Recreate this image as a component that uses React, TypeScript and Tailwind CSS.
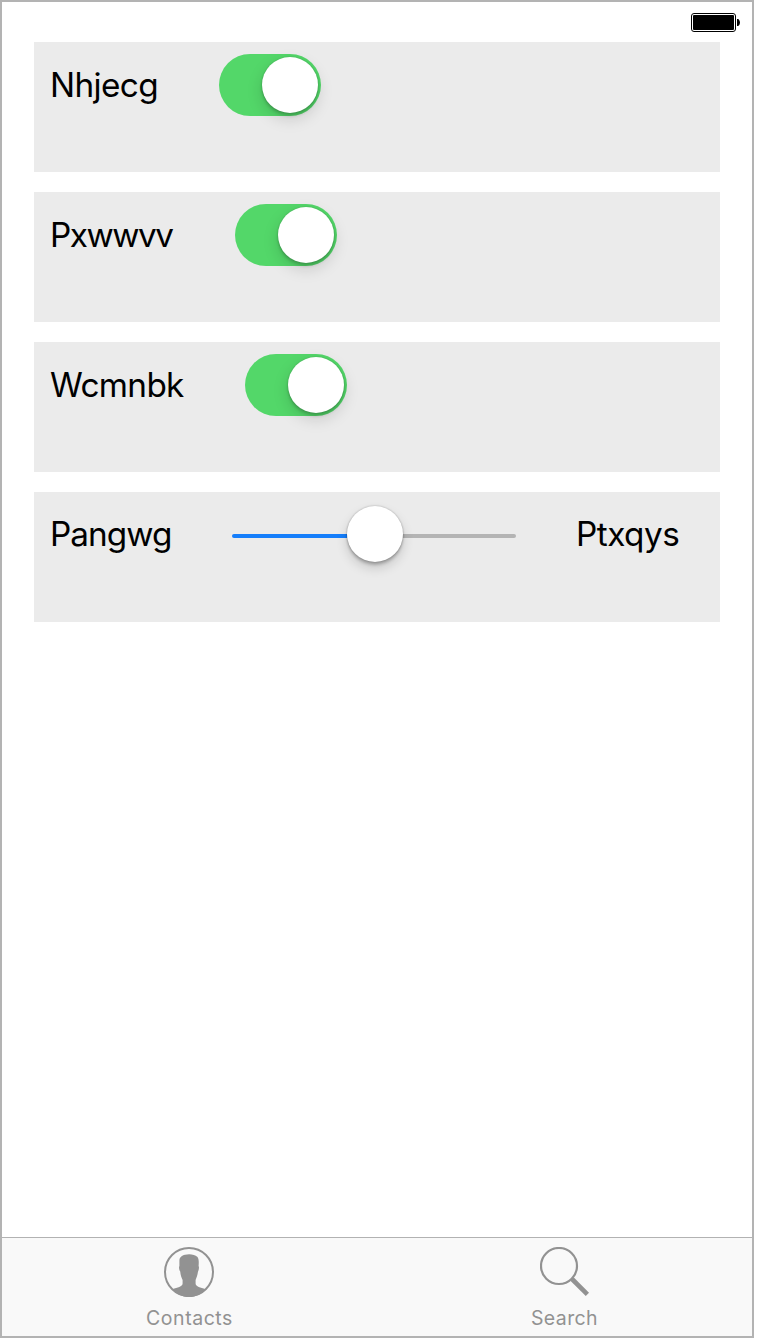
import React from "react";

const labelBase =
  "block h-[42px] whitespace-nowrap text-[33.3px] leading-[42px] text-black";

function Toggle() {
  return (
    <div
      role="switch"
      aria-checked="true"
      className="flex h-[62px] w-[102px] shrink-0 items-center justify-end rounded-full bg-[#53d769] pr-[3px]"
    >
      <div className="size-14 rounded-full bg-white shadow-[0_6px_16px_rgba(0,0,0,0.15),0_3px_3px_rgba(0,0,0,0.15),0_0_2px_rgba(0,0,0,0.2)]" />
    </div>
  );
}

function ToggleRow({ label, width, spacing }: { label: string; width: string; spacing: string }) {
  return (
    <div className="flex h-[130px] items-start bg-[#ebebeb] pt-3 pl-4">
      <div className={`shrink-0 pt-[10px] ${width}`}>
        <span className={`${labelBase} ${spacing}`}>{label}</span>
      </div>
      <Toggle />
    </div>
  );
}

function SliderRow() {
  return (
    <div className="flex h-[130px] items-start bg-[#ebebeb] pt-[14px] pl-4">
      <div className="w-[182px] shrink-0 pt-[7px]">
        <span className={`${labelBase} tracking-[-0.95px]`}>Pangwg</span>
      </div>
      <div className="flex h-14 w-[284px] shrink-0 items-center">
        <div className="mt-1 h-1 w-[115px] rounded-l-full bg-[#157efb]" />
        <div className="z-10 size-14 shrink-0 rounded-full bg-white shadow-[0_6px_12px_rgba(0,0,0,0.16),0_3px_3px_rgba(0,0,0,0.2),0_0_2px_rgba(0,0,0,0.3)]" />
        <div className="mt-1 h-1 flex-1 rounded-r-full bg-[#b4b4b4]" />
      </div>
      <div className="ml-[60px] pt-[7px]">
        <span className={`${labelBase} tracking-[-0.5px]`}>Ptxqys</span>
      </div>
    </div>
  );
}

function ContactsIcon() {
  return (
    <svg className="mr-[2px]" width="50" height="50" viewBox="0 0 50 50" fill="#929292">
      <circle cx="25" cy="25" r="24" fill="none" stroke="#929292" strokeWidth="2" />
      <path d="M15.4 19V13.5C15.4 10.2 18 8.4 21 7.7C25 6.5 31 7.2 33.2 9.8C35.2 11.8 34.8 16 34.6 19C35.4 20 34.8 23.2 34 24.6C33.5 28.4 32.4 31 31.6 33V36.5C31.8 40 36.5 40.4 41.5 42.2C38 47 31.5 50 25 50S12 47 8.5 42.2C13.5 40.4 18.4 40 18.6 36.5V33C17.6 31 16.6 28.4 16.2 24.6C15.2 23.2 14.6 20 15.4 19Z" />
    </svg>
  );
}

function SearchIcon() {
  return (
    <svg width="50" height="50" viewBox="0 0 50 50" fill="none" stroke="#929292">
      <circle cx="19" cy="19" r="18" strokeWidth="2.2" />
      <path d="M32 32L47.4 47.4" strokeWidth="4.6" />
    </svg>
  );
}

function Tab({ icon, label, spacing }: { icon: React.ReactNode; label: string; spacing: string }) {
  return (
    <div className="flex flex-1 flex-col items-center pt-[9px]">
      {icon}
      <span className={`mt-[9px] text-[19.5px] leading-6 whitespace-nowrap text-[#929292] ${spacing}`}>
        {label}
      </span>
    </div>
  );
}

export default function App() {
  return (
    <div className="h-[1340px] w-[760px] bg-white font-['Inter',sans-serif]">
      <div className="flex h-[1338px] w-[754px] flex-col border-2 border-[#b3b3b3] bg-white">
        <div className="flex h-10 shrink-0 items-start justify-end pt-[11px] pr-3">
          <svg width="49" height="19" viewBox="0 0 49 19">
            <rect x="0.5" y="0.5" width="44" height="18" rx="2.5" fill="white" stroke="black" />
            <rect x="2" y="2" width="41" height="15" rx="1" />
            <path d="M46 6H47C49.6 7 49.6 12 47 13H46Z" />
          </svg>
        </div>
        <main className="flex flex-1 flex-col gap-5 px-8">
          <ToggleRow label="Nhjecg" width="w-[169px]" spacing="tracking-[-0.6px]" />
          <ToggleRow label="Pxwwvv" width="w-[185px]" spacing="tracking-[-1.5px]" />
          <ToggleRow label="Wcmnbk" width="w-[195px]" spacing="tracking-[-0.65px]" />
          <SliderRow />
        </main>
        <nav className="flex h-[99px] shrink-0 border-t border-[#b2b2b2] bg-[#f9f9f9]">
          <Tab icon={<ContactsIcon />} label="Contacts" spacing="tracking-[0.55px]" />
          <Tab icon={<SearchIcon />} label="Search" spacing="tracking-[0.4px]" />
        </nav>
      </div>
    </div>
  );
}
